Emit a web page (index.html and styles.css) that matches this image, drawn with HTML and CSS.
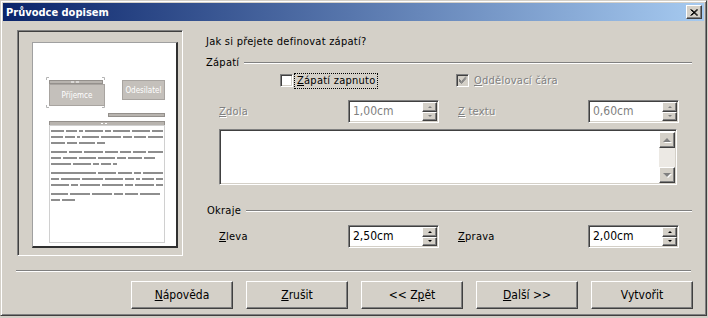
FILE: index.html
```html
<!DOCTYPE html>
<html lang="cs">
<head>
    <meta charset="UTF-8">
    <title>Průvodce dopisem</title>
    <link rel="stylesheet" href="styles.css">
</head>
<body>
<div class="window">
    <div class="titlebar">
        <span>Průvodce dopisem</span>
        <span class="close">
            <svg width="8" height="7" viewBox="0 0 8 7"><path d="M0.5 0.5 L7 6.5 M1.5 0.5 L8 6.5 M7 0.5 L0.5 6.5 M8 0.5 L1.5 6.5" stroke="#000" stroke-width="1"/></svg>
        </span>
    </div>

    <div class="main">
        <div class="preview">
            <div class="page">
                <svg width="143" height="203" viewBox="0 0 143 203">
                    <!-- recipient corner marks -->
                    <g stroke="#b4b4b4" fill="none">
                        <path d="M13.5 37 V34.5 H16"/>
                        <path d="M69 34.5 H71.5 V37"/>
                        <path d="M13.5 62 V64.5 H16"/>
                        <path d="M69 64.5 H71.5 V62"/>
                    </g>
                    <rect x="16.5" y="37.5" width="53" height="3" fill="#b8b4af" stroke="#94908c"/>
                    <path d="M38 39 H41 M43 39 H46" stroke="#fff"/>
                    <rect x="16.5" y="41.5" width="55" height="21" fill="#c4c0bb" stroke="#a8a4a0"/>
                    <text x="44" y="55" class="pv-text" text-anchor="middle">Příjemce</text>
                    <rect x="89.5" y="37.5" width="42" height="19" fill="#c4c0bb" stroke="#a8a4a0"/>
                    <text x="110.5" y="50" class="pv-text" text-anchor="middle">Odesilatel</text>
                    <rect x="75.5" y="70.5" width="56" height="3" fill="#b8b4af" stroke="#94908c"/>
                    <rect x="16.5" y="78.5" width="115" height="4" fill="#b8b4af" stroke="#94908c"/>
                    <path d="M68 80.5 H70 M72 80.5 H74" stroke="#fff"/>
                    <rect x="16.5" y="82.5" width="115" height="117" fill="none" stroke="#d0d0d0"/>
                    <g stroke="#8e8e8e" stroke-width="2">
                        <line x1="18" y1="88" x2="130" y2="88" stroke-dasharray="13 2 11 2 4 2 18 2 6 2 17 2 18 2 17"/>
                        <line x1="18" y1="94" x2="130" y2="94" stroke-dasharray="12 2 10 2 3 2 17 2 20 2 9 2 12 2 20"/>
                        <line x1="18" y1="100" x2="72" y2="100" stroke-dasharray="14 2 10 2 16 2 10"/>
                        <line x1="18" y1="109" x2="130" y2="109" stroke-dasharray="16 2 13 2 19 2 13 2 11 2 13 2 19"/>
                        <line x1="18" y1="115" x2="130" y2="115" stroke-dasharray="10 2 14 2 17 2 17 2 9 2 14 2 11"/>
                        <line x1="18" y1="121" x2="84" y2="121" stroke-dasharray="20 2 18 2 6 2 10 2 12"/>
                        <line x1="18" y1="130" x2="130" y2="130" stroke-dasharray="45 2 18 2 14 2 7 2 20"/>
                        <line x1="18" y1="136" x2="130" y2="136" stroke-dasharray="8 2 19 2 21 2 18 2 9 2 4 2 12 2 8"/>
                        <line x1="18" y1="142" x2="130" y2="142" stroke-dasharray="18 2 7 2 20 2 21 2 8 2 19 2 10"/>
                        <line x1="18" y1="151" x2="130" y2="151" stroke-dasharray="17 2 20 2 20 2 9 2 13 2 20"/>
                        <line x1="18" y1="157" x2="43" y2="157" stroke-dasharray="9 2 13"/>
                    </g>
                </svg>
            </div>
        </div>

        <div class="form">
            <p class="question">Jak si přejete definovat zápatí?</p>

            <div class="group-head"><span>Zápatí</span><span class="rule"></span></div>

            <div class="check-row">
                <div class="check-item">
                    <span class="check"></span>
                    <span class="check-label focus"><u>Z</u>ápatí zapnuto</span>
                </div>
                <div class="check-item">
                    <span class="check disabled">
                        <svg width="9" height="9" viewBox="0 0 9 9"><path d="M1 4 L3.5 6.5 L8 1.5 M1 5 L3.5 7.5 L8 2.5 M1 3 L3.5 5.5 L8 0.5" stroke="#808080" fill="none"/></svg>
                    </span>
                    <span class="check-label dim"><u>O</u>ddělovací čára</span>
                </div>
            </div>

            <div class="field-row">
                <span class="dim"><u>Z</u>dola</span>
                <div class="spin off">
                    <span class="val">1,00cm</span>
                    <span class="arrows"><span class="sbtn"><i class="up"></i></span><span class="sbtn"><i class="down"></i></span></span>
                </div>
                <span class="dim"><u>Z</u> textu</span>
                <div class="spin off">
                    <span class="val">0,60cm</span>
                    <span class="arrows"><span class="sbtn"><i class="up"></i></span><span class="sbtn"><i class="down"></i></span></span>
                </div>
            </div>

            <div class="textbox">
                <div class="scroll">
                    <span class="sqbtn"><i class="up"></i></span>
                    <span class="track"></span>
                    <span class="sqbtn"><i class="down"></i></span>
                </div>
            </div>

            <div class="group-head okraje"><span>Okraje</span><span class="rule"></span></div>

            <div class="field-row margins">
                <span><u>Z</u>leva</span>
                <div class="spin">
                    <span class="val">2,50cm</span>
                    <span class="arrows"><span class="sbtn"><i class="up"></i></span><span class="sbtn"><i class="down"></i></span></span>
                </div>
                <span><u>Z</u>prava</span>
                <div class="spin">
                    <span class="val">2,00cm</span>
                    <span class="arrows"><span class="sbtn"><i class="up"></i></span><span class="sbtn"><i class="down"></i></span></span>
                </div>
            </div>
        </div>
    </div>

    <div class="separator"></div>

    <div class="buttons">
        <button><u>N</u>ápověda</button>
        <button><u>Z</u>rušit</button>
        <button>&lt;&lt; Z<u>p</u>ět</button>
        <button><u>D</u>alší &gt;&gt;</button>
        <button>Vytvořit</button>
    </div>
</div>
</body>
</html>
```

FILE: styles.css
```css
body {
    margin: 0;
    background: #d4d0c8;
    font-family: "DejaVu Sans Condensed", "DejaVu Sans", sans-serif;
    font-size: 11px;
    color: #000;
}
u {
    text-decoration: underline;
    text-underline-offset: 1px;
}
.window {
    width: 707px;
    height: 316px;
    box-sizing: border-box;
    padding: 2px;
    border: 1px solid;
    border-color: #d4d0c8 #404040 #404040 #d4d0c8;
    box-shadow: inset 1px 1px #fff, inset -1px -1px #808080;
    background: #d4d0c8;
}

/* title bar */
.titlebar {
    height: 18px;
    display: flex;
    align-items: center;
    justify-content: space-between;
    padding: 0 2px 0 3px;
    background: linear-gradient(to right, #0a246a, #a6caf0);
    color: #fff;
    font-weight: bold;
}
.close {
    width: 16px;
    height: 14px;
    box-sizing: border-box;
    display: flex;
    align-items: center;
    justify-content: center;
    background: #d4d0c8;
    border: 1px solid;
    border-color: #fff #404040 #404040 #fff;
    box-shadow: inset -1px -1px #808080;
}

/* main area */
.main {
    display: flex;
    padding: 9px 0 0 14px;
}
.preview {
    width: 166px;
    height: 226px;
    box-sizing: border-box;
    padding: 11px 0 0 14px;
    border: 1px solid;
    border-color: #808080 #fff #fff #808080;
    box-shadow: inset 1px 1px #404040, inset -1px -1px #d4d0c8;
}
.page {
    width: 143px;
    height: 203px;
    background: #fff;
    border-style: solid;
    border-width: 1px 2px 2px 1px;
    border-color: #a0a0a0 #303030 #303030 #a0a0a0;
}
.page svg {
    display: block;
}
.pv-text {
    font-family: "DejaVu Sans Condensed", "DejaVu Sans", sans-serif;
    font-size: 8px;
    fill: #fff;
}

.form {
    width: 486px;
    margin-left: 23px;
    padding-top: 5px;
    line-height: 14px;
    letter-spacing: 0.25px;
}
.question {
    margin: 0;
}
.group-head {
    display: flex;
    align-items: center;
    height: 14px;
    margin-top: 7px;
}
.group-head .rule {
    flex: 1;
    margin-left: 5px;
    border-top: 1px solid #808080;
    border-bottom: 1px solid #fff;
}
.group-head.okraje {
    margin-top: 19px;
    padding-left: 1px;
}

.dim {
    color: #808080;
    text-shadow: 1px 1px #fff;
}

/* checkboxes */
.check-row {
    display: grid;
    grid-template-columns: 176px 1fr;
    height: 17px;
    margin-top: 2px;
    padding-left: 74px;
}
.check-item {
    display: flex;
    align-items: center;
}
.check {
    width: 13px;
    height: 13px;
    box-sizing: border-box;
    display: flex;
    align-items: center;
    justify-content: center;
    background: #fff;
    border: 1px solid;
    border-color: #808080 #fff #fff #808080;
    box-shadow: inset 1px 1px #404040, inset -1px -1px #d4d0c8;
}
.check.disabled {
    background: #d4d0c8;
}
.check-label {
    margin-left: 1px;
    padding: 0 2px;
    border: 1px solid transparent;
    line-height: 14px;
}
.check-label.focus {
    border: 1px dotted #000;
}
.check-label.dim {
    margin-left: 2px;
}

/* spin fields */
.field-row {
    display: grid;
    grid-template-columns: 129px 110px 130px 91px;
    align-items: center;
    margin-top: 11px;
    padding-left: 13px;
}
.field-row.margins {
    margin-top: 7px;
}
.spin {
    width: 91px;
    height: 23px;
    box-sizing: border-box;
    display: flex;
    background: #fff;
    border: 1px solid;
    border-color: #808080 #fff #fff #808080;
    box-shadow: inset 1px 1px #404040, inset -1px -1px #d4d0c8;
    padding: 1px;
    letter-spacing: 0;
}
.spin .val {
    flex: 1;
    padding-left: 3px;
    line-height: 19px;
    font-size: 12px;
}
.spin.off .val {
    color: #808080;
}
.arrows {
    width: 15px;
    display: flex;
    flex-direction: column;
}
.sbtn, .sqbtn {
    flex: 1;
    display: flex;
    align-items: center;
    justify-content: center;
    box-sizing: border-box;
    background: #d4d0c8;
    border: 1px solid;
    border-color: #fff #404040 #404040 #fff;
    box-shadow: inset -1px -1px #808080;
}
.sbtn i, .sqbtn i {
    width: 0;
    height: 0;
    border-left: 2px solid transparent;
    border-right: 2px solid transparent;
}
.sbtn i.up, .sqbtn i.up {
    border-bottom: 2px solid #000;
}
.sbtn i.down, .sqbtn i.down {
    border-top: 2px solid #000;
}
.spin.off .sbtn i.up {
    border-bottom-color: #808080;
}
.spin.off .sbtn i.down {
    border-top-color: #808080;
}

/* text box */
.textbox {
    width: 458px;
    height: 56px;
    box-sizing: border-box;
    margin: 6px 0 0 13px;
    padding: 2px 1px 1px 2px;
    display: flex;
    justify-content: flex-end;
    background: #fff;
    border: 1px solid;
    border-color: #808080 #fff #fff #808080;
    box-shadow: inset 1px 1px #404040, inset -1px -1px #d4d0c8;
}
.scroll {
    width: 16px;
    display: flex;
    flex-direction: column;
}
.sqbtn {
    flex: none;
    height: 16px;
}
.sqbtn i {
    border-left-width: 4px;
    border-right-width: 4px;
}
.sqbtn i.up {
    border-bottom: 4px solid #808080;
    filter: drop-shadow(1px 1px 0 #fff);
}
.sqbtn i.down {
    border-top: 4px solid #808080;
    filter: drop-shadow(1px 1px 0 #fff);
}
.track {
    flex: 1;
    background: #ece9e4;
}

/* bottom */
.separator {
    width: 675px;
    margin: 14px 0 0 13px;
    border-top: 1px solid #808080;
    border-bottom: 1px solid #fff;
}
.buttons {
    display: flex;
    justify-content: flex-end;
    gap: 13px;
    margin-top: 9px;
    padding-right: 11px;
}
button {
    width: 102px;
    height: 28px;
    font-family: inherit;
    font-size: 12px;
    color: #000;
    background: #d4d0c8;
    border: 1px solid;
    border-color: #fff #404040 #404040 #fff;
    box-shadow: inset -1px -1px #808080;
    padding: 0;
}
```
